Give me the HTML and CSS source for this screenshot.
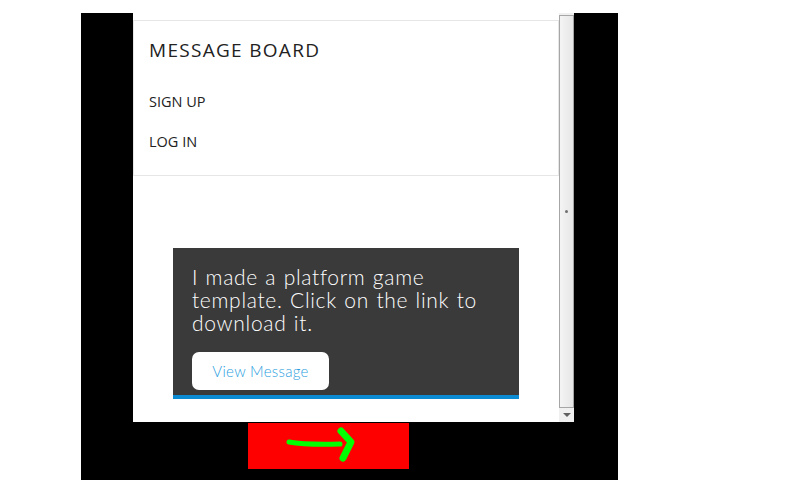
FILE: index.html
```html
<!DOCTYPE html>
<html>
<head>
<meta charset="utf-8">
<link rel="stylesheet" href="styles.css">
</head>
<body>
<div class="frame">
  <div class="window">
    <div class="page">
      <div class="header">
        <div class="title">MESSAGE BOARD</div>
        <div class="nav">SIGN UP</div>
        <div class="nav">LOG IN</div>
      </div>
      <div class="card">
        <p class="msg">I made a platform game template. Click on the link to download it.</p>
        <a class="btn">View Message</a>
      </div>
    </div>
    <div class="scrollbar">
      <div class="thumb"><span class="grip"></span></div>
      <div class="arrow"><span class="tri"></span></div>
    </div>
  </div>
  <div class="next">
    <svg width="161" height="46" viewBox="0 0 161 46">
      <path d="M41 19 Q58 22 92 21" fill="none" stroke="#00ff00" stroke-width="5" stroke-linecap="round"/>
      <path d="M93 8 L103 19 L95 35" fill="none" stroke="#00ff00" stroke-width="7" stroke-linecap="round" stroke-linejoin="round"/>
    </svg>
  </div>
</div>
</body>
</html>
```
FILE: styles.css
```css
html, body {
  margin: 0;
  padding: 0;
  background: #fff;
}
.frame {
  margin: 13px 0 0 81px;
  width: 537px;
  height: 467px;
  background: #000;
  display: flex;
  flex-direction: column;
}
.window {
  margin-left: 52px;
  width: 441px;
  height: 409px;
  background: #fff;
  display: flex;
}
.page {
  width: 426px;
  padding-top: 7px;
  box-sizing: border-box;
}
.header {
  border: 1px solid #e6e6e6;
  padding: 17px 15px 23px 15px;
  font-family: "Open Sans", sans-serif;
  color: #222;
}
.title {
  font-size: 19px;
  line-height: 24px;
  letter-spacing: 1.3px;
  margin-bottom: 30px;
}
.nav {
  font-size: 14.5px;
  line-height: 20px;
  margin-bottom: 20px;
}
.nav:last-child {
  margin-bottom: 0;
}
.card {
  margin: 72px 0 0 40px;
  width: 346px;
  box-sizing: border-box;
  background: #3a3a3a;
  border-bottom: 4px solid #0b8bd1;
  padding: 17px 30px 5px 19px;
  font-family: Lato, sans-serif;
}
.msg {
  margin: 0 0 18px 0;
  color: #fff;
  font-size: 21px;
  line-height: 23px;
  font-weight: 300;
  letter-spacing: 0.7px;
  word-spacing: 1px;
}
.btn {
  display: flex;
  align-items: center;
  justify-content: center;
  width: 137px;
  height: 38px;
  background: #fff;
  border-radius: 7px;
  color: #2a9ee0;
  font-size: 15px;
  font-weight: 300;
  letter-spacing: 0.3px;
}
.scrollbar {
  width: 15px;
  display: flex;
  flex-direction: column;
  background: #f0f0f0;
}
.thumb {
  flex: 1;
  margin-top: 2px;
  border: 1px solid #a6a6a6;
  border-bottom: none;
  background: linear-gradient(to right, #f4f4f4, #e6e6e6);
  display: flex;
  align-items: center;
  justify-content: center;
}
.grip {
  width: 3px;
  height: 3px;
  border-radius: 50%;
  background: #707070;
}
.arrow {
  height: 15px;
  border-top: 1px solid #a6a6a6;
  box-sizing: border-box;
  background: #f0f0f0;
  display: flex;
  align-items: center;
  justify-content: center;
}
.tri {
  width: 0;
  height: 0;
  border-left: 4px solid transparent;
  border-right: 4px solid transparent;
  border-top: 4px solid #606060;
}
.next {
  margin: 1px 0 0 167px;
  width: 161px;
  height: 46px;
  background: #ff0000;
}
.next svg {
  display: block;
}
```
